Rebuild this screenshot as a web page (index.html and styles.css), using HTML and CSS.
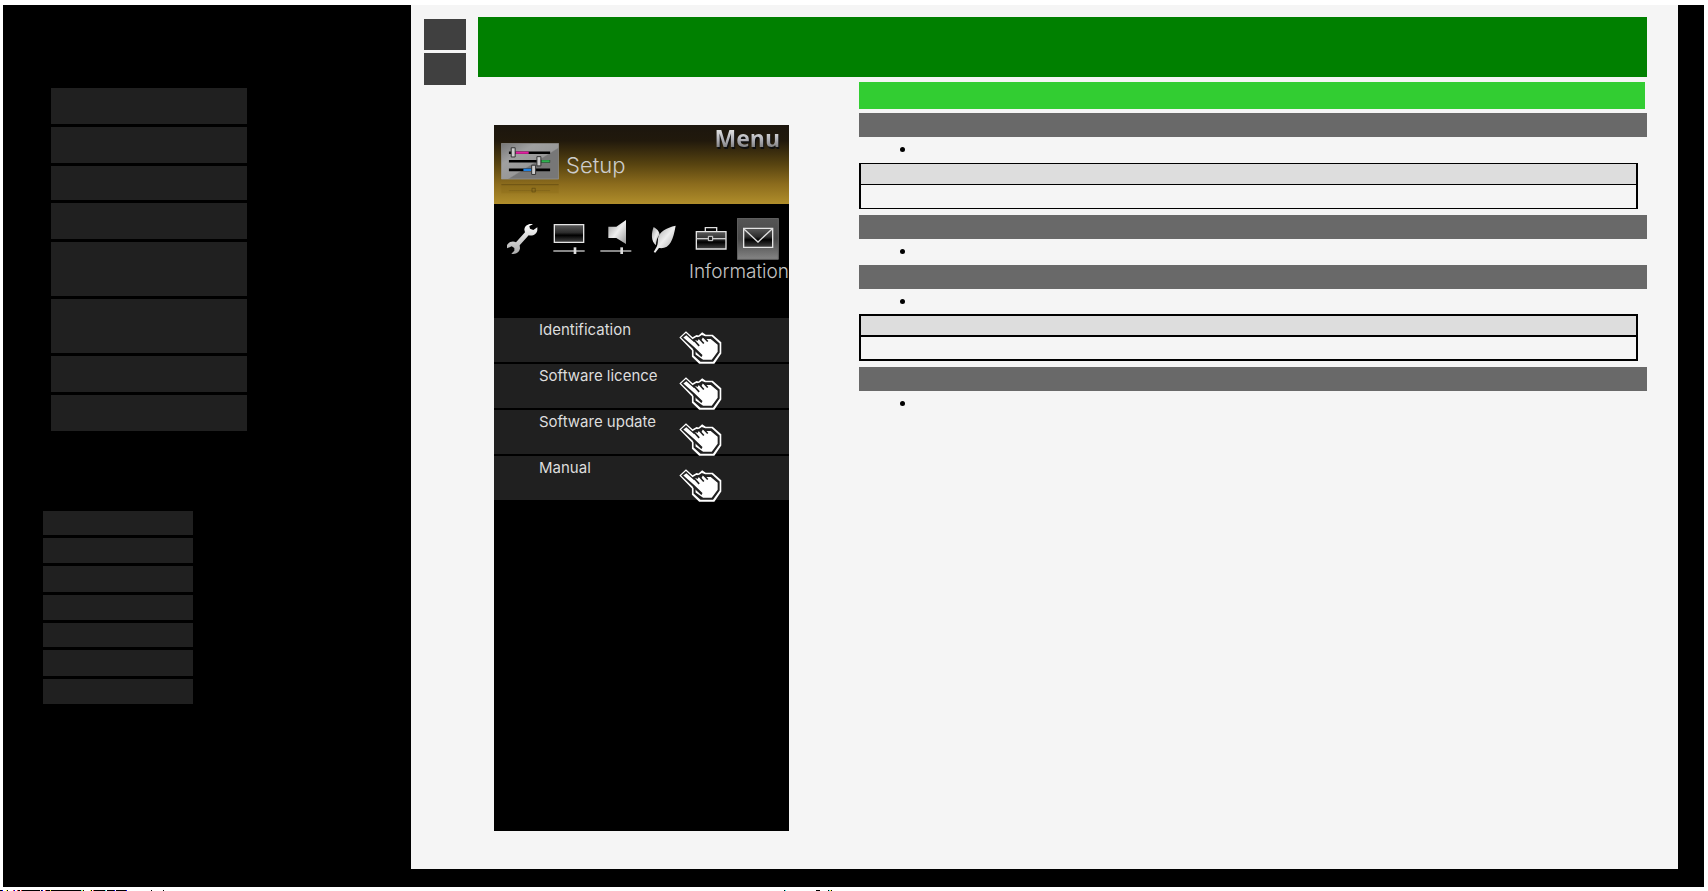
FILE: index.html
```html
<!DOCTYPE html>
<html lang="en">
<head>
<meta charset="utf-8">
<meta name="viewport" content="width=device-width, initial-scale=1">
<title>Setup - Information</title>
<link rel="stylesheet" href="styles.css">
</head>
<body>
<svg class="defs" aria-hidden="true">
  <defs>
    <linearGradient id="metal" x1="0" y1="0" x2="0" y2="1"><stop offset="0" stop-color="#fff"/><stop offset="1" stop-color="#aaa"/></linearGradient>
    <linearGradient id="metalSide" x1="0" y1="0" x2="1" y2="1"><stop offset="0" stop-color="#999"/><stop offset=".5" stop-color="#eee"/><stop offset="1" stop-color="#999"/></linearGradient>
    <linearGradient id="glass" x1="0" y1="0" x2="0" y2="1"><stop offset="0" stop-color="#5a5a5a"/><stop offset=".45" stop-color="#2c2c2c"/><stop offset=".6" stop-color="#000"/><stop offset="1" stop-color="#444"/></linearGradient>
    <linearGradient id="tile" x1="0" y1="0" x2="0" y2="1"><stop offset="0" stop-color="#555"/><stop offset=".5" stop-color="#484848"/><stop offset="1" stop-color="#858585"/></linearGradient>
    <linearGradient id="plate" x1="0" y1="0" x2="1" y2="1"><stop offset="0" stop-color="#777"/><stop offset=".3" stop-color="#a0a0a0"/><stop offset=".55" stop-color="#989898"/><stop offset=".57" stop-color="#777"/><stop offset="1" stop-color="#777"/></linearGradient>
    <symbol id="hand" viewBox="568 64 130 100">
      <path fill="#fff" d="M569 84 589 65 609 83 621 76 627 78 638 68 649 75H670L696 98V132L675 163H629L607 142V123Z"/>
      <path fill="#202020" d="M574 84 589 70 609 89 620 82 627 83 637 76 647 80H667L691 102V129L671 157H633L612 138V120Z"/>
      <path fill="#fff" d="M581 84 590 77 614 98 618 91 624 94 629 87 636 91 640 84 648 88H664L685 106V127L667 151H641L618 135V124L636 141 639 137 613 112Z"/>
      <path fill="none" stroke="#202020" stroke-width="5" d="m611 89 18 20M626 83l17 19M640 80l15 16M611 117l26 24"/>
    </symbol>
  </defs>
</svg>

<div class="shell">
  <aside class="sidebar">
    <nav class="chapters" aria-label="Chapters">
      <a href="#c1" aria-label="Chapter 1"></a>
      <a href="#c2" aria-label="Chapter 2"></a>
      <a class="short" href="#c3" aria-label="Chapter 3"></a>
      <a href="#c4" aria-label="Chapter 4"></a>
      <a class="tall" href="#c5" aria-label="Chapter 5"></a>
      <a class="tall" href="#c6" aria-label="Chapter 6"></a>
      <a href="#c7" aria-label="Chapter 7"></a>
      <a href="#c8" aria-label="Chapter 8"></a>
    </nav>
    <nav class="links" aria-label="Links">
      <a class="low" href="#l1" aria-label="Link 1"></a>
      <a href="#l2" aria-label="Link 2"></a>
      <a class="high" href="#l3" aria-label="Link 3"></a>
      <a href="#l4" aria-label="Link 4"></a>
      <a class="low" href="#l5" aria-label="Link 5"></a>
      <a class="high" href="#l6" aria-label="Link 6"></a>
      <a href="#l7" aria-label="Link 7"></a>
    </nav>
  </aside>

  <main class="main">
    <div class="pager">
      <button type="button" aria-label="Previous page"></button>
      <button type="button" aria-label="Next page"></button>
    </div>
    <div class="article">
      <header class="title"></header>
      <div class="columns">
        <section class="screen">
          <header class="screen-head">
            <svg class="setup-icon" viewBox="32 68 176 160" aria-hidden="true">
              <path fill="url(#plate)" stroke="#999" stroke-width="2" d="M33 69H207V177H33Z"/>
              <path stroke="#000" stroke-width="8" d="M56 97H181M56 123H181M56 149H181"/>
              <path stroke="#e020a0" stroke-width="7" d="M76 97h40"/>
              <path stroke="#30b050" stroke-width="7" d="M154 123h26"/>
              <path stroke="#2080e0" stroke-width="7" d="M100 149h26"/>
              <path fill="#ccc" stroke="#333" stroke-width="3" d="M63 82h12v28H63ZM141 109h12v28h-12ZM125 135h12v28h-12Z"/>
              <path fill="#8a6a18" d="M33 193H207V220H33Z" opacity=".35"/>
              <path stroke="#584410" stroke-width="3" d="M33 194H207" opacity=".6"/>
              <path stroke="#5c4812" stroke-width="3" d="M56 212H181" opacity=".25"/>
              <path fill="none" stroke="#54420f" stroke-width="3" d="M126 205h10v11h-10Z" opacity=".6"/>
            </svg>
            <h2>Setup</h2>
            <strong>Menu</strong>
          </header>
          <div class="tabs">
            <svg viewBox="35 39 126 126" aria-hidden="true"><path fill="url(#metal)" d="M131 58c-12-4-25 3-26 16l2 8-27 30c-10-5-22-1-27 9v9l14-6 8 5v8l-9 9c13 4 25-5 26-16l-1-9 27-30c13 3 25-4 26-16v-8l-12 8-10-4-2-8Z"/></svg>
            <svg viewBox="178 39 126 126" aria-hidden="true"><path fill="url(#glass)" stroke="#e4e4e4" stroke-width="4" d="M197 59H285V112H197Z"/><path stroke="#ccc" stroke-width="4" d="M194 138H288"/><path stroke="#ddd" stroke-width="8" d="M259 127v20"/></svg>
            <svg viewBox="320 39 126 126" aria-hidden="true"><path fill="url(#metalSide)" d="M360 65H384L413 45V117L384 99H360Z"/><path stroke="#ccc" stroke-width="4" d="M336 138H429"/><path stroke="#ddd" stroke-width="8" d="M400 127v20"/></svg>
            <svg viewBox="462 39 126 126" aria-hidden="true"><path fill="url(#metalSide)" d="M501 121c-16-13-14-37-7-55 9 5 16 12 18 22-7 9-11 20-11 33Z"/><path fill="url(#metalSide)" d="M560 62c-28 6-51 19-53 39-1 10 0 16-4 24l-9 16 5 2 11-14c32 4 42-22 50-67Z"/></svg>
            <svg viewBox="604 39 126 126" aria-hidden="true"><path fill="none" stroke="#ddd" stroke-width="4" d="M650 78V68H684V78"/><path fill="url(#glass)" stroke="#e4e4e4" stroke-width="4" d="M623 80H712V132H623Z"/><path stroke="#ccc" stroke-width="4" d="M623 101H712"/><path fill="#222" stroke="#ddd" stroke-width="3" d="M659 94h13v13h-13Z"/></svg>
            <svg viewBox="741 39 126 126" aria-hidden="true"><path fill="url(#tile)" stroke="#666" stroke-width="3" d="M742 40H865V163H742Z"/><path fill="url(#glass)" stroke="#e4e4e4" stroke-width="4" d="M761 70H848V127H761Z"/><path fill="none" stroke="#ddd" stroke-width="4" d="m761 71 43 40 43-40"/></svg>
          </div>
          <p class="tab-label">Information</p>
          <ul class="menu">
            <li><a href="#identification">Identification<svg><use href="#hand"/></svg></a></li>
            <li><a href="#licence">Software licence<svg><use href="#hand"/></svg></a></li>
            <li><a href="#update">Software update<svg><use href="#hand"/></svg></a></li>
            <li><a href="#manual">Manual<svg><use href="#hand"/></svg></a></li>
          </ul>
        </section>

        <section class="details">
          <div class="subtitle"></div>
          <div class="bar" id="identification"></div>
          <ul class="notes"><li></li></ul>
          <table class="note-table thin"><thead><tr><th></th></tr></thead><tbody><tr><td></td></tr></tbody></table>
          <div class="bar" id="licence"></div>
          <ul class="notes"><li></li></ul>
          <div class="bar" id="update"></div>
          <ul class="notes"><li></li></ul>
          <table class="note-table"><thead><tr><th></th></tr></thead><tbody><tr><td></td></tr></tbody></table>
          <div class="bar" id="manual"></div>
          <ul class="notes"><li></li></ul>
        </section>
      </div>
    </div>
  </main>
</div>
<footer class="footer">
  <svg width="900" height="1" shape-rendering="crispEdges" aria-hidden="true">
    <path stroke="#000" d="M0 .5h2M7 .5h1M14 .5h1M18 .5h2M22 .5h18M41 .5h1M46 .5h4M51 .5h30M83 .5h1M91 .5h1M94 .5h11M107 .5h7M116 .5h10M151 .5h1M163 .5h1M784 .5h1M816 .5h4M828 .5h1M831 .5h1"/>
    <path stroke="#00f" d="M2 .5h1M14 .5h1M42 .5h1M114 .5h1M126 .5h1"/>
    <path stroke="#f33" d="M13 .5h1M17 .5h1M21 .5h1M45 .5h1M93 .5h1"/>
    <path stroke="#ff3" d="M6 .5h1M50 .5h1M82 .5h1M90 .5h1M830 .5h1"/>
    <path stroke="#3ff" d="M81 .5h1M105 .5h1M785 .5h1M829 .5h1"/>
  </svg>
</footer>
</body>
</html>
```
FILE: styles.css
```css
* { box-sizing: border-box; }

body {
  margin: 0;
  padding: 5px 4px 0 3px;
  min-height: 100vh;
  display: flex;
  flex-direction: column;
  background: #fff;
  font-family: Inter, "Liberation Sans", sans-serif;
}

.defs { position: absolute; width: 0; height: 0; }

.shell {
  flex: 1;
  display: flex;
  background: #000;
  padding: 0 26px 18px 0;
}

/* Sidebar */
.sidebar { width: 408px; flex-shrink: 0; padding: 83px 0 0 40px; }
.chapters, .links { display: flex; flex-direction: column; gap: 3px; }
.chapters { width: 196px; margin-left: 8px; }
.links { width: 150px; margin-top: 80px; }
.sidebar a { display: block; background: #202020; }
.chapters a { height: 36px; }
.chapters .short { height: 34px; }
.chapters .tall { height: 54px; }
.links a { height: 25px; }
.links .low { height: 24px; }
.links .high { height: 26px; }

/* Main area */
.main {
  flex: 1;
  display: flex;
  gap: 12px;
  align-items: flex-start;
  background: #f5f5f5;
  padding: 12px 31px 38px 13px;
}
.pager { display: flex; flex-direction: column; gap: 3px; padding-top: 2px; width: 42px; }
.pager button { height: 31px; padding: 0; border: 0; background: #404040; }
.pager button:last-child { height: 32px; }
.article { flex: 1; }
.title { height: 60px; background: #008000; }
.columns { display: flex; align-items: flex-start; gap: 70px; padding: 5px 0 0 16px; }

/* Device screen */
.screen { width: 295px; height: 706px; margin-top: 43px; background: #000; }
.screen-head {
  display: flex;
  height: 79px;
  padding: 0 9px 0 7px;
  background: linear-gradient(#1c160e 0, #21190c 20%, #584410 50%, #8c6c1d 75%, #b08e2b 100%);
}
.setup-icon { width: 58px; height: 53px; margin-top: 18px; }
.screen h2 {
  margin: 27px 0 0 7px;
  font-size: 22px;
  line-height: 26px;
  font-weight: 300;
  color: #ccc;
}
.screen strong {
  margin-left: auto;
  height: 32px;
  font: 700 23px/27px "Open Sans", "Noto Sans", sans-serif;
  color: transparent;
  background: linear-gradient(#ddd 6px, #b4b4bb 14px, #777 24px);
  background-clip: text;
  -webkit-background-clip: text;
  filter: drop-shadow(1px 2px 0 #111);
}
.tabs { display: flex; justify-content: space-around; padding: 14px 7px 0 4px; }
.tabs svg { width: 42px; height: 42px; }
.tab-label {
  margin: 0;
  height: 58px;
  padding-top: 1px;
  font-size: 19px;
  line-height: 22px;
  font-weight: 300;
  text-align: right;
  color: #c4c4c4;
}
.menu { margin: 0; padding: 0; list-style: none; display: flex; flex-direction: column; gap: 2px; }
.menu a {
  display: flex;
  justify-content: space-between;
  height: 44px;
  padding: 2px 67px 0 45px;
  background: #202020;
  color: #ddd;
  text-decoration: none;
  font-size: 15px;
  line-height: 20px;
}
.menu svg { width: 43px; height: 33px; margin-top: 11px; }

/* Details */
.details { flex: 1; }
.subtitle { height: 27px; margin: 0 2px 4px 0; background: #32cd32; }
.bar { height: 24px; background: #696969; }
.notes {
  margin: 0;
  padding: 2px 0 4px 57px;
  height: 26px;
  font: 16px/20px "Liberation Sans", sans-serif;
}
.note-table {
  width: calc(100% - 9px);
  height: 47px;
  margin: -1px 0 6px;
  border-collapse: separate;
  border-spacing: 0;
  border: 2px solid #000;
}
.note-table th, .note-table td { padding: 0; }
.note-table th { height: 21px; background: #ddd; border-bottom: 2px solid #000; }
.note-table td { height: 22px; }
.thin { height: 46px; margin-top: 0; border-width: 1px 2px; }
.thin th { border-bottom-width: 1px; }
.thin td { height: 23px; }

.footer { height: 4px; padding-top: 3px; margin-left: -3px; overflow: hidden; }
.footer svg { display: block; }
```
